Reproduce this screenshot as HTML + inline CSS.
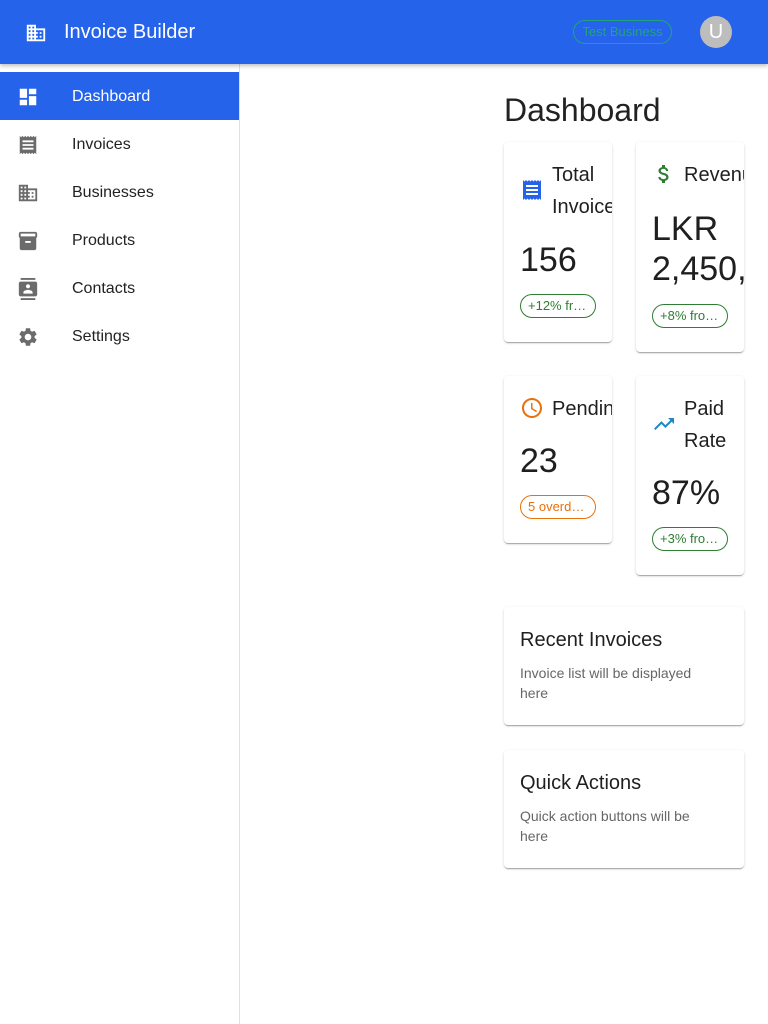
<!DOCTYPE html>
<html><head><meta charset="utf-8"><style>
*{box-sizing:border-box;margin:0;padding:0}
body{width:768px;height:1024px;overflow:hidden;background:#fff;font-family:"Liberation Sans",Arial,sans-serif;color:#1f1f1f;position:relative}
.hdr{position:absolute;left:0;top:0;width:768px;height:64px;background:#2563eb;box-shadow:0 2px 4px rgba(0,0,0,.25);z-index:2}
.hdr .t{position:absolute;left:64px;top:21px;color:#fff;font-size:20px}
.chip-h{position:absolute;left:573px;top:20px;width:99px;height:24px;border:1px solid #22a37a;border-radius:12px;color:#22a37a;font-size:13px;line-height:22px;text-align:center}
.av{position:absolute;left:700px;top:16px;width:32px;height:32px;border-radius:50%;background:#bdbdbd;color:#fff;font-size:20px;line-height:32px;text-align:center}
.side{position:absolute;left:0;top:64px;width:240px;height:960px;border-right:1px solid #e0e0e0}
.item{position:absolute;left:0;width:239px;height:48px;font-size:16px;line-height:50px;color:#222}
.item span{position:absolute;left:72px}
.item svg{position:absolute;left:17px;top:14px}
.act{background:#2563eb;color:#fff}
h1{position:absolute;left:504px;top:92px;font-size:32px;font-weight:400;color:#222}
.card{position:absolute;background:#fff;border-radius:4px;box-shadow:0 2px 1px -1px rgba(0,0,0,.2),0 1px 1px rgba(0,0,0,.14),0 1px 3px rgba(0,0,0,.12);overflow:hidden}
.ct{position:absolute;left:48px;font-size:20px;line-height:32px;white-space:nowrap}
.val{position:absolute;left:16px;font-size:34px;line-height:40px;white-space:nowrap}
.chip{position:absolute;left:16px;width:76px;height:24px;border:1px solid #2e7d32;color:#2e7d32;border-radius:12px;font-size:13px;line-height:22px;padding:0 7px;white-space:nowrap;overflow:hidden;text-overflow:ellipsis}
.ic{position:absolute;left:16px}
.big h3{position:absolute;left:16px;top:22px;font-size:20px;font-weight:400}
.big p{position:absolute;left:16px;top:56px;width:200px;font-size:14px;line-height:20px;color:#666}
</style></head><body>
<div class="hdr">
<svg style="position:absolute;left:25px;top:22px" width="22" height="22" viewBox="0 0 24 24"><path fill="#fff" d="M12 7V3H2v18h20V7H12zM6 19H4v-2h2v2zm0-4H4v-2h2v2zm0-4H4V9h2v2zm0-4H4V5h2v2zm4 12H8v-2h2v2zm0-4H8v-2h2v2zm0-4H8V9h2v2zm0-4H8V5h2v2zm10 12h-8v-2h2v-2h-2v-2h2v-2h-2V9h8v10zm-2-8h-2v2h2v-2zm0 4h-2v2h2v-2z"/></svg>
<div class="t">Invoice Builder</div>
<div class="chip-h">Test Business</div>
<div class="av">U</div>
</div>
<div class="side">
<div class="item act" style="top:8px"><svg width="22" height="22" viewBox="0 0 24 24"><path fill="#fff" d="M3 13h8V3H3v10zm0 8h8v-6H3v6zm10 0h8V11h-8v10zm0-18v6h8V3h-8z"/></svg><span>Dashboard</span></div>
<div class="item" style="top:56px"><svg width="22" height="22" viewBox="0 0 24 24"><path fill="#6b6b6b" d="M19.5 3.5 18 2l-1.5 1.5L15 2l-1.5 1.5L12 2l-1.5 1.5L9 2 7.5 3.5 6 2 4.5 3.5 3 2v20l1.5-1.5L6 22l1.5-1.5L9 22l1.5-1.5L12 22l1.5-1.5L15 22l1.5-1.5L18 22l1.5-1.5L21 22V2l-1.5 1.5zM18 17H6v-2h12v2zm0-4H6v-2h12v2zm0-4H6V7h12v2z"/></svg><span>Invoices</span></div>
<div class="item" style="top:104px"><svg width="22" height="22" viewBox="0 0 24 24"><path fill="#6b6b6b" d="M12 7V3H2v18h20V7H12zM6 19H4v-2h2v2zm0-4H4v-2h2v2zm0-4H4V9h2v2zm0-4H4V5h2v2zm4 12H8v-2h2v2zm0-4H8v-2h2v2zm0-4H8V9h2v2zm0-4H8V5h2v2zm10 12h-8v-2h2v-2h-2v-2h2v-2h-2V9h8v10zm-2-8h-2v2h2v-2zm0 4h-2v2h2v-2z"/></svg><span>Businesses</span></div>
<div class="item" style="top:152px"><svg width="22" height="22" viewBox="0 0 24 24"><path fill="#6b6b6b" d="M20 2H4c-1 0-2 .9-2 2v3.01c0 .72.43 1.34 1 1.69V20c0 1.1 1.1 2 2 2h14c.9 0 2-.9 2-2V8.7c.57-.35 1-.97 1-1.690V4c0-1.1-1-2-2-2zm-5 12H9v-2h6v2zm5-7H4V4h16v3z"/></svg><span>Products</span></div>
<div class="item" style="top:200px"><svg width="22" height="22" viewBox="0 0 24 24"><path fill="#6b6b6b" d="M20 0H4v2h16V0zM4 24h16v-2H4v2zM20 4H4c-1.1 0-2 .9-2 2v12c0 1.1.9 2 2 2h16c1.1 0 2-.9 2-2V6c0-1.1-.9-2-2-2zm-8 2.75c1.24 0 2.25 1.01 2.25 2.25s-1.01 2.25-2.25 2.25S9.75 10.24 9.75 9 10.760 6.75 12 6.75zM17 17H7v-1.5c0-1.67 3.33-2.5 5-2.5s5 .83 5 2.5V17z"/></svg><span>Contacts</span></div>
<div class="item" style="top:248px"><svg width="22" height="22" viewBox="0 0 24 24"><path fill="#6b6b6b" d="M19.14 12.94c.04-.3.06-.61.06-.94 0-.32-.02-.64-.07-.94l2.03-1.58a.49.49 0 0 0 .12-.61l-1.92-3.32a.49.49 0 0 0-.59-.22l-2.39.96c-.5-.38-1.03-.7-1.62-.94l-.36-2.54a.48.48 0 0 0-.48-.41h-3.840c-.24 0-.43.17-.47.41l-.36 2.54c-.59.24-1.13.57-1.62.94l-2.39-.96a.49.49 0 0 0-.59.22L2.74 8.87c-.12.21-.08.47.12.61l2.03 1.58c-.05.3-.09.63-.09.94s.02.64.07.94l-2.03 1.58a.49.49 0 0 0-.12.61l1.92 3.32c.12.22.37.29.59.22l2.39-.96c.5.38 1.03.7 1.62.94l.36 2.54c.05.24.24.41.48.41h3.84c.24 0 .44-.17.47-.41l.36-2.54c.59-.24 1.13-.56 1.62-.94l2.39.96c.22.08.47 0 .59-.22l1.92-3.32c.12-.22.07-.47-.12-.61l-2.01-1.58zM12 15.6c-1.98 0-3.6-1.62-3.6-3.6s1.62-3.6 3.6-3.6 3.6 1.62 3.6 3.6-1.62 3.6-3.6 3.6z"/></svg><span>Settings</span></div>
</div>
<h1>Dashboard</h1>
<div class="card" style="left:504px;top:142px;width:108px;height:200px">
<svg class="ic" style="top:36px" width="24" height="24" viewBox="0 0 24 24"><path fill="#2563eb" d="M19.5 3.5 18 2l-1.5 1.5L15 2l-1.5 1.5L12 2l-1.5 1.5L9 2 7.5 3.5 6 2 4.5 3.5 3 2v20l1.5-1.5L6 22l1.5-1.5L9 22l1.5-1.5L12 22l1.5-1.5L15 22l1.5-1.5L18 22l1.5-1.5L21 22V2l-1.5 1.5zM18 17H6v-2h12v2zm0-4H6v-2h12v2zm0-4H6V7h12v2z"/></svg>
<div class="ct" style="top:17px">Total<br>Invoices</div>
<div class="val" style="top:98px">156</div>
<div class="chip" style="top:152px">+12% from last month</div>
</div>
<div class="card" style="left:636px;top:142px;width:108px;height:210px">
<svg class="ic" style="top:20px" width="24" height="24" viewBox="0 0 24 24"><path fill="#2e7d32" d="M11.8 10.9c-2.27-.59-3-1.2-3-2.15 0-1.09 1.01-1.85 2.7-1.85 1.78 0 2.44.85 2.5 2.1h2.21c-.07-1.72-1.12-3.3-3.21-3.81V3h-3v2.16c-1.94.42-3.5 1.68-3.5 3.61 0 2.31 1.91 3.46 4.7 4.13 2.5.6 3 1.48 3 2.41 0 .69-.49 1.79-2.7 1.79-2.06 0-2.870-.92-2.98-2.1h-2.2c.12 2.19 1.76 3.42 3.68 3.83V21h3v-2.15c1.95-.37 3.5-1.5 3.5-3.55 0-2.84-2.43-3.81-4.7-4.4z"/></svg>
<div class="ct" style="top:17px">Revenue</div>
<div class="val" style="top:67px">LKR<br>2,450,000</div>
<div class="chip" style="top:162px">+8% from last month</div>
</div>
<div class="card" style="left:504px;top:376px;width:108px;height:167px">
<svg class="ic" style="top:20px" width="24" height="24" viewBox="0 0 24 24"><path fill="#e8710a" d="M11.99 2C6.47 2 2 6.48 2 12s4.47 10 9.99 10C17.52 22 22 17.52 22 12S17.52 2 11.99 2zM12 20c-4.42 0-8-3.58-8-8s3.58-8 8-8 8 3.58 8 8-3.58 8-8 8zm.5-13H11v6l5.25 3.15.75-1.23-4.5-2.67z"/></svg>
<div class="ct" style="top:17px">Pending</div>
<div class="val" style="top:65px">23</div>
<div class="chip" style="top:119px;border-color:#e8710a;color:#e8710a">5 overdue invoices</div>
</div>
<div class="card" style="left:636px;top:376px;width:108px;height:199px">
<svg class="ic" style="top:36px" width="24" height="24" viewBox="0 0 24 24"><path fill="#1e88c8" d="m16 6 2.29 2.29-4.88 4.88-4-4L2 16.59 3.41 18l6-6 4 4 6.3-6.29L22 12V6z"/></svg>
<div class="ct" style="top:17px">Paid<br>Rate</div>
<div class="val" style="top:97px">87%</div>
<div class="chip" style="top:151px">+3% from last month</div>
</div>
<div class="card big" style="left:504px;top:607px;width:240px;height:118px"><h3>Recent Invoices</h3><p>Invoice list will be displayed here</p></div>
<div class="card big" style="left:504px;top:750px;width:240px;height:118px"><h3>Quick Actions</h3><p>Quick action buttons will be here</p></div>
</body></html>
